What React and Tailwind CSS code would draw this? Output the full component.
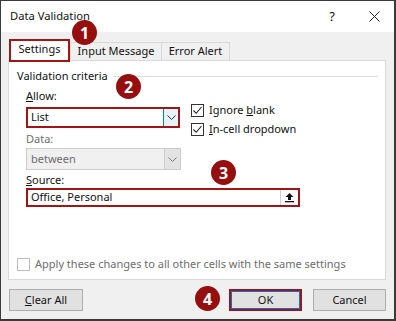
import React from 'react';

const font = { fontFamily: '"Noto Sans", "Open Sans", sans-serif' };

function Badge({ n, className }) {
  return (
    <div
      className={`absolute w-[25px] h-[25px] rounded-full bg-[#960f0f] text-white text-[16px] font-bold flex items-center justify-center leading-none ${className}`}
    >
      {n}
    </div>
  );
}

function Chevron({ color = '#333' }) {
  return (
    <svg width="9" height="5" viewBox="0 0 9 5">
      <path d="M0.5 0.5 L4.5 4.5 L8.5 0.5" fill="none" stroke={color} strokeWidth="1" />
    </svg>
  );
}

function Check({ checked, disabled }) {
  return (
    <div
      className={`w-[13px] h-[13px] border bg-white flex items-center justify-center ${disabled ? 'border-[#bcbcbc]' : 'border-[#333]'}`}
    >
      {checked && (
        <svg width="11" height="11" viewBox="0 0 11 11">
          <path d="M1.5 5.5 L4.2 8.3 L9.5 2" fill="none" stroke="#222" strokeWidth="1.1" />
        </svg>
      )}
    </div>
  );
}

export default function App() {
  return (
    <div
      className="relative w-[396px] h-[321px] bg-[#f0f0f0] border-l border-t border-r-2 border-b-2 border-[#3a3a3a] flex flex-col text-[11px] text-[#111]"
      style={font}
    >
      {/* title bar */}
      <div className="h-[31px] bg-white flex items-center pl-[9px] pr-[14px]">
        <span className="text-[11.2px]">Data Validation</span>
        <span className="ml-auto mr-[34px] text-[13px]">?</span>
        <svg width="11" height="11" viewBox="0 0 11 11">
          <path d="M0.5 0.5 L10.5 10.5 M10.5 0.5 L0.5 10.5" stroke="#222" strokeWidth="1" />
        </svg>
      </div>

      <div className="flex-1 flex flex-col pl-[7px] pr-[8px]">
        {/* tabs */}
        <div className="mt-[7px] flex items-end pl-[1px] h-[21px]">
          <div className="relative z-10 w-[61px] h-[23px] -mb-[2px] border-2 border-[#a01515] bg-white flex items-center justify-center pb-[2px]">
            Settings
          </div>
          <div className="w-[92px] h-[18px] border border-b-0 border-[#d9d9d9] flex items-center justify-center">
            Input Message
          </div>
          <div className="w-[68px] h-[18px] border border-b-0 border-l-0 border-[#d9d9d9] flex items-center justify-center">
            Error Alert
          </div>
        </div>

        {/* panel */}
        <div className="h-[220px] bg-white border border-[#d9d9d9] flex flex-col">
          <div className="mt-[7px] h-[16px] flex items-center pl-[8px] pr-[7px]">
            <span>Validation criteria</span>
            <div className="flex-1 h-px bg-[#dcdcdc] ml-[5px]" />
          </div>

          <div className="flex pl-[17px]">
            <div className="w-[155px] flex flex-col">
              <div className="mt-[4px] h-[16px] leading-[16px]">
                <span className="underline">A</span>llow:
              </div>
              <div className="mt-[3px] w-[154px] h-[21px] border-2 border-[#a01515] flex">
                <div className="flex-1 flex items-center pl-[3px]">List</div>
                <div className="w-[15px] bg-[#e5f1fb] border-l border-[#0078d7] flex items-center justify-center">
                  <Chevron />
                </div>
              </div>
              <div className="mt-[3px] h-[16px] leading-[16px] text-[#6d6d6d]">Data:</div>
              <div className="mt-[1px] w-[155px] h-[22px] border border-[#cccccc] bg-[#f0f0f0] flex">
                <div className="flex-1 flex items-center pl-[4px] text-[#6d6d6d]">between</div>
                <div className="w-[16px] bg-[#e3e3e3] border-l border-[#cccccc] flex items-center justify-center">
                  <Chevron color="#777" />
                </div>
              </div>
            </div>
            <div className="ml-[10px] pt-[17px] flex flex-col">
              <div className="h-[19px] flex items-center gap-[5px]">
                <Check checked />
                <span>
                  Ignore <span className="underline">b</span>lank
                </span>
              </div>
              <div className="h-[19px] flex items-center gap-[5px]">
                <Check checked />
                <span>
                  <span className="underline">I</span>n-cell dropdown
                </span>
              </div>
            </div>
          </div>

          <div className="pl-[17px]">
            <div className="mt-[2px] h-[16px] leading-[16px]">
              <span className="underline">S</span>ource:
            </div>
            <div className="w-[274px] h-[19px] border-2 border-[#a01515] flex">
              <div className="flex-1 flex items-center pl-[3px]">Office, Personal</div>
              <div className="w-[18px] border-l border-[#d0d0d0] flex items-center justify-center">
                <svg width="11" height="11" viewBox="0 0 11 11">
                  <path d="M5.5 1 L1.5 5 L4 5 L4 8 L7 8 L7 5 L9.5 5 Z" fill="#111" />
                  <rect x="1" y="9" width="9" height="1.3" fill="#111" />
                </svg>
              </div>
            </div>
          </div>

          <div className="mt-auto mb-[7px] h-[16px] flex items-center pl-[8px] gap-[5px] text-[#6d6d6d]">
            <Check disabled />
            <span>Apply these changes to all other cells with the same settings</span>
          </div>
        </div>

        {/* buttons */}
        <div className="mt-[9px] flex h-[22px] pl-[1px]">
          <button className="w-[74px] h-[22px] bg-[#e1e1e1] border border-[#adadad] flex items-center justify-center">
            <span>
              <span className="underline">C</span>lear All
            </span>
          </button>
          <button className="ml-auto w-[73px] h-[22px] bg-[#e1e1e1] border-2 border-[#a01515] flex items-center justify-center">
            <div className="w-full h-full border border-[#0078d7] flex items-center justify-center">OK</div>
          </button>
          <button className="ml-[11px] w-[73px] h-[22px] bg-[#e1e1e1] border border-[#adadad] flex items-center justify-center">
            Cancel
          </button>
        </div>
      </div>

      <Badge n="1" className="left-[71px] top-[19px]" />
      <Badge n="2" className="left-[115px] top-[73px]" />
      <Badge n="3" className="left-[210px] top-[159px]" />
      <Badge n="4" className="left-[194px] top-[285px]" />
    </div>
  );
}
